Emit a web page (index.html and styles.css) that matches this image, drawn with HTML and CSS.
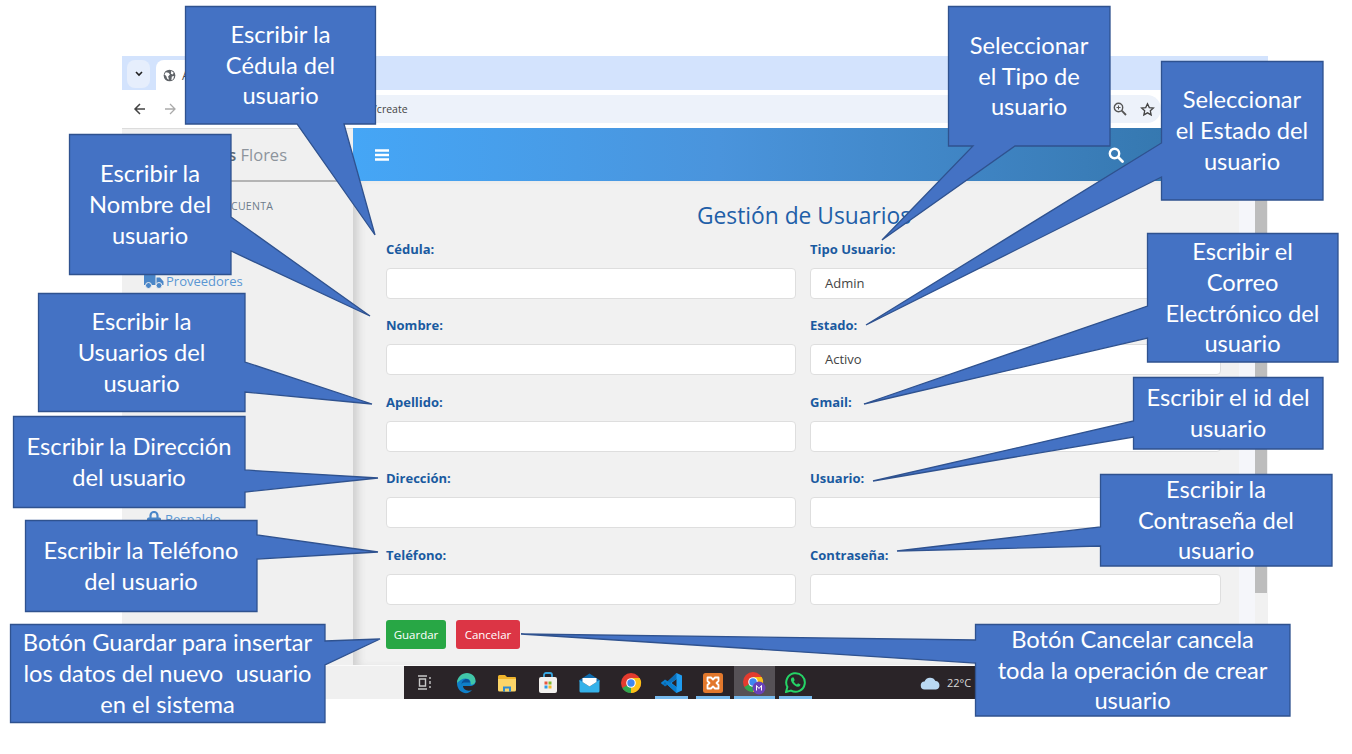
FILE: index.html
```html
<!DOCTYPE html>
<html lang="es">
<head>
<meta charset="utf-8">
<title>Gestión de Usuarios</title>
<link rel="stylesheet" href="styles.css">
</head>
<body>
<div class="window">
  <div class="tabstrip">
    <div class="tab-menu"><svg width="10" height="8" viewBox="0 0 10 8"><path d="M2 2l3 3 3-3" fill="none" stroke="#222" stroke-width="1.6"/></svg></div>
    <div class="tab">
      <svg width="13" height="13" viewBox="0 0 14 14"><circle cx="7" cy="7" r="6.3" fill="#5f6368"/><path d="M3 3.5l3 .5 1.5 2-2 2 1 3.5-2-1-1-3-2-1.5zM9 2l2.5 2-1 2-2-1zM9.5 8l2.5-.5-1 3.5-2 1z" fill="#fff"/></svg>
      <span class="tab-title">A</span>
    </div>
  </div>
  <div class="toolbar">
    <svg class="nav-arrow" width="14" height="14" viewBox="0 0 14 14"><path d="M12 7H2.5M7 2L2 7l5 5" fill="none" stroke="#444" stroke-width="1.5"/></svg>
    <svg class="nav-arrow" width="14" height="14" viewBox="0 0 14 14"><path d="M2 7h9.500M7 2l5 5-5 5" fill="none" stroke="#aaa" stroke-width="1.300"/></svg>
    <div class="address">
      <span class="url">/create</span>
      <span class="address-icons">
        <svg width="14" height="14" viewBox="0 0 14 14"><circle cx="5.500" cy="5.500" r="4.200" fill="none" stroke="#555" stroke-width="1.400"/><path d="M8.700 8.700L13 13" stroke="#555" stroke-width="1.800"/><path d="M3.500 5.500h4M5.500 3.500v4" stroke="#555" stroke-width="1"/></svg>
        <svg width="15" height="15" viewBox="0 0 16 16"><path d="M8 1.800l1.900 4.100 4.400.5-3.300 3 .9 4.400L8 11.600l-3.900 2.200.9-4.400-3.300-3 4.400-.5z" fill="none" stroke="#444" stroke-width="1.400"/></svg>
      </span>
    </div>
  </div>
  <div class="app">
    <aside class="sidebar">
      <div class="brand"><b>s</b> Flores</div>
      <div class="side-head">CUENTA</div>
      <div class="side-link side-prov">
        <svg width="20" height="15" viewBox="0 0 20 15"><path d="M0 1.500A1.500 1.500 0 0 1 1.500 0H11.500V11H0zM12.500 3.500H16L19.500 7.500V11H12.500z" fill="#4a86c8"/><circle cx="4.500" cy="11.500" r="3" fill="#4a86c8" stroke="#f0f0f0"/><circle cx="15" cy="11.500" r="3" fill="#4a86c8" stroke="#f0f0f0"/></svg>
        <span>Proveedores</span>
      </div>
      <div class="side-link side-resp">
        <svg width="14" height="16" viewBox="0 0 14 16"><path d="M3.500 7V4.500a3.500 3.500 0 0 1 7 0V7" fill="none" stroke="#4a86c8" stroke-width="2.200"/><rect x="0" y="6.500" width="14" height="9.500" rx="1.500" fill="#4a86c8"/></svg>
        <span>Respaldo</span>
      </div>
    </aside>
    <div class="main">
      <header class="topbar">
        <svg width="14" height="12" viewBox="0 0 14 12"><path d="M0 1.500h14M0 6h14M0 10.500h14" stroke="#fff" stroke-width="2.400"/></svg>
        <svg width="16" height="16" viewBox="0 0 16 16"><circle cx="6.500" cy="6.500" r="4.700" fill="none" stroke="#fff" stroke-width="2.400"/><path d="M10 10l4.500 4.500" stroke="#fff" stroke-width="2.800" stroke-linecap="round"/></svg>
      </header>
      <div class="content">
        <div class="panel">
          <h1 class="title">Gestión de Usuarios</h1>
          <form class="form">
            <div class="field"><label>Cédula:</label><div class="input"></div></div>
            <div class="field"><label>Tipo Usuario:</label><div class="input">Admin</div></div>
            <div class="field"><label>Nombre:</label><div class="input"></div></div>
            <div class="field"><label>Estado:</label><div class="input">Activo</div></div>
            <div class="field"><label>Apellido:</label><div class="input"></div></div>
            <div class="field"><label>Gmail:</label><div class="input"></div></div>
            <div class="field"><label>Dirección:</label><div class="input"></div></div>
            <div class="field"><label>Usuario:</label><div class="input"></div></div>
            <div class="field"><label>Teléfono:</label><div class="input"></div></div>
            <div class="field"><label>Contraseña:</label><div class="input"></div></div>
          </form>
          <div class="actions">
            <span class="btn btn-save">Guardar</span>
            <span class="btn btn-cancel">Cancelar</span>
          </div>
        </div>
        <div class="gutter"></div>
        <div class="scrollbar"><div class="thumb"></div></div>
      </div>
    </div>
  </div>
  <div class="bottom">
    <div class="taskbar">
      <div class="task-item task-view"><svg width="16" height="15" viewBox="0 0 16 15"><path d="M1 1h9M1 14h9M2.500 4h6v7h-6zM13 2v2M13 6v3M13 11v2" fill="none" stroke="#c8c8c8" stroke-width="1.400"/></svg></div>
      <div class="task-item"><svg width="22" height="22" viewBox="0 0 22 22"><path d="M2 11A9.500 9.500 0 0 1 20.500 9C21 12 18 14 15 14H8c0 3 4 6 9 4-2 3-6 4-9 2.500C4 19 2 15 2 11z" fill="#0f7fc8"/><path d="M2 11C2 5 7 1 12 1c5 0 9 4 8.500 8.500-.3 2.500-3 3.500-5 3 1-3-1-6-5-6-3 0-6 2-8.500 4.500z" fill="#41c6a8"/><path d="M6.500 13c0-3.500 2.500-6 5-6 2 0 3.500 1.500 3.500 3.500H9c-1.300 0-2.500 1-2.500 2.500z" fill="#0a4f96"/></svg></div>
      <div class="task-item"><svg width="20" height="18" viewBox="0 0 20 18"><path d="M1 2.500A1.500 1.500 0 0 1 2.500 1H8l2 2h8a1 1 0 0 1 1 1v2H1z" fill="#f0b52c"/><path d="M1 5h18v11a1.500 1.500 0 0 1-1.500 1.500h-15A1.500 1.500 0 0 1 1 16z" fill="#fbd568"/><path d="M6 12.500h8v5H6z" fill="#2d8bd2"/><path d="M8 14.500h4v3H8z" fill="#fbd568"/></svg></div>
      <div class="task-item"><svg width="20" height="22" viewBox="0 0 20 22"><path d="M6 6V3a2 2 0 0 1 2-2h4a2 2 0 0 1 2 2v3" fill="none" stroke="#39a7e0" stroke-width="1.800"/><rect x="1" y="5" width="18" height="16" rx="2" fill="#f3f1ee"/><path d="M6.500 9.500h3v3h-3z" fill="#e8573f"/><path d="M10.500 9.500h3v3h-3z" fill="#7fb82f"/><path d="M6.500 13.500h3v3h-3z" fill="#2e9be6"/><path d="M10.500 13.500h3v3h-3z" fill="#f4b92c"/></svg></div>
      <div class="task-item"><svg width="21" height="20" viewBox="0 0 21 20"><path d="M10.500 .5L20.500 7v2H.5V7z" fill="#0f6cae"/><path d="M.5 7l10 6.500L20.500 7v11a1.500 1.500 0 0 1-1.500 1.500H2A1.500 1.500 0 0 1 .5 18z" fill="#35b2ea"/><path d="M3.500 5h14v4l-7 4.500-7-4.500z" fill="#fff"/></svg></div>
      <div class="task-item"><svg width="22" height="22" viewBox="0 0 22 22"><circle cx="11" cy="11" r="10" fill="#e33b2e"/><path d="M11 11L2.300 16A10 10 0 0 0 11 21c1 0 1.500 0 2-.2z" fill="#2fa84f"/><path d="M11 6h8.700A10 10 0 0 1 11 21z" fill="#fbc116"/><circle cx="11" cy="11" r="4.800" fill="#fff"/><circle cx="11" cy="11" r="3.700" fill="#3f87f0"/></svg></div>
      <div class="task-item running"><svg width="22" height="22" viewBox="0 0 22 22"><path d="M15.500 1L21 3.500v15L15.500 21 5.500 12zM15.500 7l-5 4 5 4z" fill="#1f9cf0" fill-rule="evenodd"/><path d="M15.500 1L4 11.500 1.500 9.500 0 11l4 3.500L15.500 7z" fill="#0d6fb8"/><path d="M15.500 21L4 10.500 1.500 12.500 0 11l4-3.500L15.500 15z" fill="#0a7fd0"/></svg></div>
      <div class="task-item running"><svg class="xampp" width="20" height="20" viewBox="0 0 20 20"><rect width="20" height="20" rx="2.500" fill="#e2782c"/><path d="M4.500 4.500h3.500l2 2 2-2h3.500v3.500l-2 2 2 2v3.500h-3.500l-2-2-2 2H4.500V12l2-2-2-2z" fill="none" stroke="#fff" stroke-width="1.800" stroke-linejoin="round"/></svg></div>
      <div class="task-item current"><svg width="24" height="24" viewBox="0 0 24 24"><circle cx="11" cy="11" r="10" fill="#e33b2e"/><path d="M11 11L2.300 16A10 10 0 0 0 11 21c1 0 1.500 0 2-.2z" fill="#2fa84f"/><path d="M11 6h8.700A10 10 0 0 1 11 21z" fill="#fbc116"/><circle cx="11" cy="11" r="4.800" fill="#fff"/><circle cx="11" cy="11" r="3.700" fill="#3f87f0"/><circle cx="17" cy="17" r="6.500" fill="#6a42b8"/><path d="M14.500 19.500v-5l2.500 3 2.500-3v5" fill="none" stroke="#fff" stroke-width="1"/></svg></div>
      <div class="task-item running"><svg width="21" height="21" viewBox="0 0 21 21"><path d="M1 20l1.400-5A9.300 9.300 0 1 1 6 18.600z" fill="none" stroke="#25d366" stroke-width="2"/><path d="M7 5.500c-1.500 1-1.500 3 0 5.200 1.500 2.300 4 4 6 4 1.500 0 2.500-1 2.500-2.200l-2.500-1.300-1 1.200c-1.500-.5-2.700-1.800-3.300-3.200l1-1L8.700 5.500z" fill="#25d366"/></svg></div>
      <div class="weather">
        <svg width="21" height="14" viewBox="0 0 21 14"><path d="M5 13.500a4 4 0 0 1-.5-8A6 6 0 0 1 15.500 5a4.300 4.300 0 0 1 .5 8.500z" fill="#b9d8f2"/></svg>
        <span>22°C</span>
      </div>
    </div>
  </div>
</div>

<svg class="shapes" width="1352" height="754" viewBox="0 0 1352 754">
  <g fill="#4472c4" stroke="#2f528f" stroke-width="1.300" stroke-linejoin="miter">
    <path d="M185.500 6.500H375.500V124H344L375 235 297 124H185.500z"/>
    <path d="M69.500 134.500H231V217L370 316 231 251V274.500H69.500z"/>
    <path d="M38.500 293.500H245V362L372 404 245 392V411.500H38.500z"/>
    <path d="M13.500 416.500H245V470L378 478 245 492V507.500H13.500z"/>
    <path d="M25.500 520.500H257V535L378 552 257 559V611.500H25.500z"/>
    <path d="M10.500 624.500H325V641L380 639 325 665V722.500H10.500z"/>
    <path d="M948.500 6.500H1110V146H1015L882 240 973 146H948.500z"/>
    <path d="M1161.500 61.500H1323V200H1161.500V177L866 325 1161.500 143z"/>
    <path d="M1147.500 233.500H1338V362H1147.500V338L864 404 1147.500 306z"/>
    <path d="M1133.500 377.500H1323V449H1133.500V437L873 481 1133.500 421z"/>
    <path d="M1100.500 474.500H1332V566H1100.500V546L897 551 1100.500 527z"/>
    <path d="M975.500 624.500H1290V716H975.500V663L521 634 975.500 640z"/>
  </g>
</svg>

<div class="callout c-cedula">Escribir la<br>Cédula del<br>usuario</div>
<div class="callout c-nombre">Escribir la<br>Nombre del<br>usuario</div>
<div class="callout c-usuarios">Escribir la<br>Usuarios del<br>usuario</div>
<div class="callout c-direccion">Escribir la Dirección<br>del usuario</div>
<div class="callout c-telefono">Escribir la Teléfono<br>del usuario</div>
<div class="callout c-guardar">Botón Guardar para insertar<br>los datos del nuevo&nbsp; usuario<br>en el sistema</div>
<div class="callout c-tipo">Seleccionar<br>el Tipo de<br>usuario</div>
<div class="callout c-estado">Seleccionar<br>el Estado del<br>usuario</div>
<div class="callout c-correo">Escribir el<br>Correo<br>Electrónico del<br>usuario</div>
<div class="callout c-id">Escribir el id del<br>usuario</div>
<div class="callout c-pass">Escribir la<br>Contraseña del<br>usuario</div>
<div class="callout c-cancelar">Botón Cancelar cancela<br>toda la operación de crear<br>usuario</div>
</body>
</html>
```

FILE: styles.css
```css
* { box-sizing: border-box; }
html, body { margin: 0; height: 100%; }
body {
  position: relative;
  width: 1352px;
  height: 754px;
  overflow: hidden;
  background: #fff;
  font-family: "Open Sans", "Noto Sans", sans-serif;
}

/* Screenshot pasted on the slide */
.window {
  position: absolute;
  left: 122px;
  top: 56px;
  width: 1146px;
  height: 643px;
  display: flex;
  flex-direction: column;
  background: #f0f0f0;
}
.tabstrip {
  height: 34px;
  background: #d3e3fd;
  display: flex;
  align-items: flex-end;
  padding-left: 5px;
  gap: 6px;
}
.tab-menu {
  width: 23px;
  height: 28px;
  margin-bottom: 2px;
  border-radius: 8px;
  background: #e6eefc;
  display: flex;
  align-items: center;
  justify-content: center;
}
.tab {
  width: 215px;
  height: 30px;
  background: #fff;
  border-radius: 8px 8px 0 0;
  display: flex;
  align-items: center;
  gap: 6px;
  padding-left: 7px;
  font-size: 12px;
  color: #444;
}
.toolbar {
  height: 38px;
  background: #fff;
  display: flex;
  align-items: center;
  padding-left: 11px;
  gap: 16px;
}
.address {
  flex: 1;
  height: 28px;
  margin-right: 107px;
  background: #edf2fa;
  border-radius: 14px;
  display: flex;
  align-items: center;
  justify-content: space-between;
  padding: 0 6px 0 180px;
  font-size: 10.500px;
  color: #444;
}
.address-icons { display: flex; align-items: center; gap: 13px; }

.app { height: 537px; display: flex; }
.sidebar {
  width: 231px;
  background: #f0f0f0;
  border-top: 1px solid #dcdcdc;
  display: flex;
  flex-direction: column;
}
.brand {
  height: 53px;
  border-bottom: 2px solid #b4b4b4;
  padding: 14px 66px 0 0;
  text-align: right;
  font-size: 16.500px;
  line-height: 24px;
  color: #8d949c;
}
.brand b { font-weight: 600; color: #5e6a75; }
.side-head {
  margin-top: 16px;
  padding-left: 109px;
  font-size: 10.500px;
  line-height: 16px;
  color: #6d7c8b;
  letter-spacing: .3px;
}
.side-link {
  display: flex;
  align-items: center;
  gap: 2px;
  font-size: 13px;
  line-height: 18px;
  color: #5b97d3;
}
.side-prov { margin-top: 58px; padding-left: 22px; }
.side-resp { margin-top: 220px; padding-left: 25px; gap: 4px; }

.main { flex: 1; display: flex; flex-direction: column; min-width: 0; }
.topbar {
  height: 53px;
  flex: none;
  background: linear-gradient(90deg, #45a6f6 0%, #4a94dc 40%, #3a7db8 80%, #2f72a6 100%);
  display: flex;
  align-items: center;
  justify-content: space-between;
  padding: 0 144px 0 22px;
}
.content {
  flex: 1;
  display: flex;
  min-height: 0;
  background: #f1f1f1;
  box-shadow: inset 9px 0 8px -4px #cfcfcf;
}
.panel { width: 886px; padding: 0 0 0 33px; }
.title {
  margin: 20px 0 0;
  width: 836px;
  text-align: center;
  font-size: 22.800px;
  font-weight: 400;
  line-height: 30px;
  color: #1f5fa8;
}
.form {
  margin-top: 10px;
  display: grid;
  grid-template-columns: 410px 411px;
  column-gap: 14px;
  row-gap: 18.400px;
}
.field { display: flex; flex-direction: column; gap: 11px; }
.field label {
  font-size: 13px;
  line-height: 16px;
  font-weight: 700;
  color: #1a5aa0;
  height: 16px;
}
.input {
  height: 31px;
  background: #fff;
  border: 1px solid #dedede;
  border-radius: 4px;
  padding-left: 14px;
  font-size: 13px;
  line-height: 29px;
  color: #444;
}
.actions { margin-top: 15px; display: flex; gap: 10px; }
.btn {
  height: 29px;
  border-radius: 3px;
  color: #fff;
  font-size: 11.500px;
  line-height: 29px;
  text-align: center;
}
.btn-save { width: 60px; background: #28a745; }
.btn-cancel { width: 64px; background: #dc3545; }
.gutter { width: 16px; background: #f5f6fa; }
.scrollbar { width: 12px; background: #f1f1f1; }
.thumb { height: 412px; background: #bdbdbd; }

.bottom {
  height: 34px;
  border-top: 1px solid #fafafa;
  padding-left: 282px;
}
.taskbar {
  height: 33px;
  background: #2a2428;
  display: flex;
  align-items: center;
}
.task-item {
  width: 41.200px;
  height: 33px;
  display: flex;
  align-items: center;
  justify-content: center;
  flex: none;
  position: relative;
}
.running::after,
.current::after {
  content: "";
  position: absolute;
  bottom: 0;
  height: 3px;
  background: #76b9ed;
}
.running::after { left: 4px; right: 4px; }
.current::after { left: 0; right: 0; }
.current { background: #565156; }
.weather {
  margin-left: 104px;
  display: flex;
  align-items: center;
  gap: 6px;
  font-size: 11px;
  color: #d8d8d8;
}

/* Callouts over the screenshot */
.shapes { position: absolute; left: 0; top: 0; }
.callout {
  position: absolute;
  display: flex;
  align-items: center;
  justify-content: center;
  text-align: center;
  color: #fff;
  font-family: Lato, "Open Sans", sans-serif;
  font-size: 23.700px;
  line-height: 30.700px;
}
.c-cedula { left: 185px; top: 6px; width: 191px; height: 118px; }
.c-nombre { left: 69px; top: 134px; width: 162px; height: 141px; }
.c-usuarios { left: 38px; top: 293px; width: 207px; height: 119px; }
.c-direccion { left: 13px; top: 416px; width: 232px; height: 92px; }
.c-telefono { left: 25px; top: 520px; width: 232px; height: 92px; }
.c-guardar { left: 10px; top: 624px; width: 315px; height: 99px; }
.c-tipo { left: 948px; top: 6px; width: 162px; height: 140px; }
.c-estado { left: 1161px; top: 61px; width: 162px; height: 139px; }
.c-correo { left: 1147px; top: 233px; width: 191px; height: 129px; }
.c-id { left: 1133px; top: 377px; width: 190px; height: 72px; }
.c-pass { left: 1100px; top: 474px; width: 232px; height: 92px; }
.c-cancelar { left: 975px; top: 624px; width: 315px; height: 92px; }
```
